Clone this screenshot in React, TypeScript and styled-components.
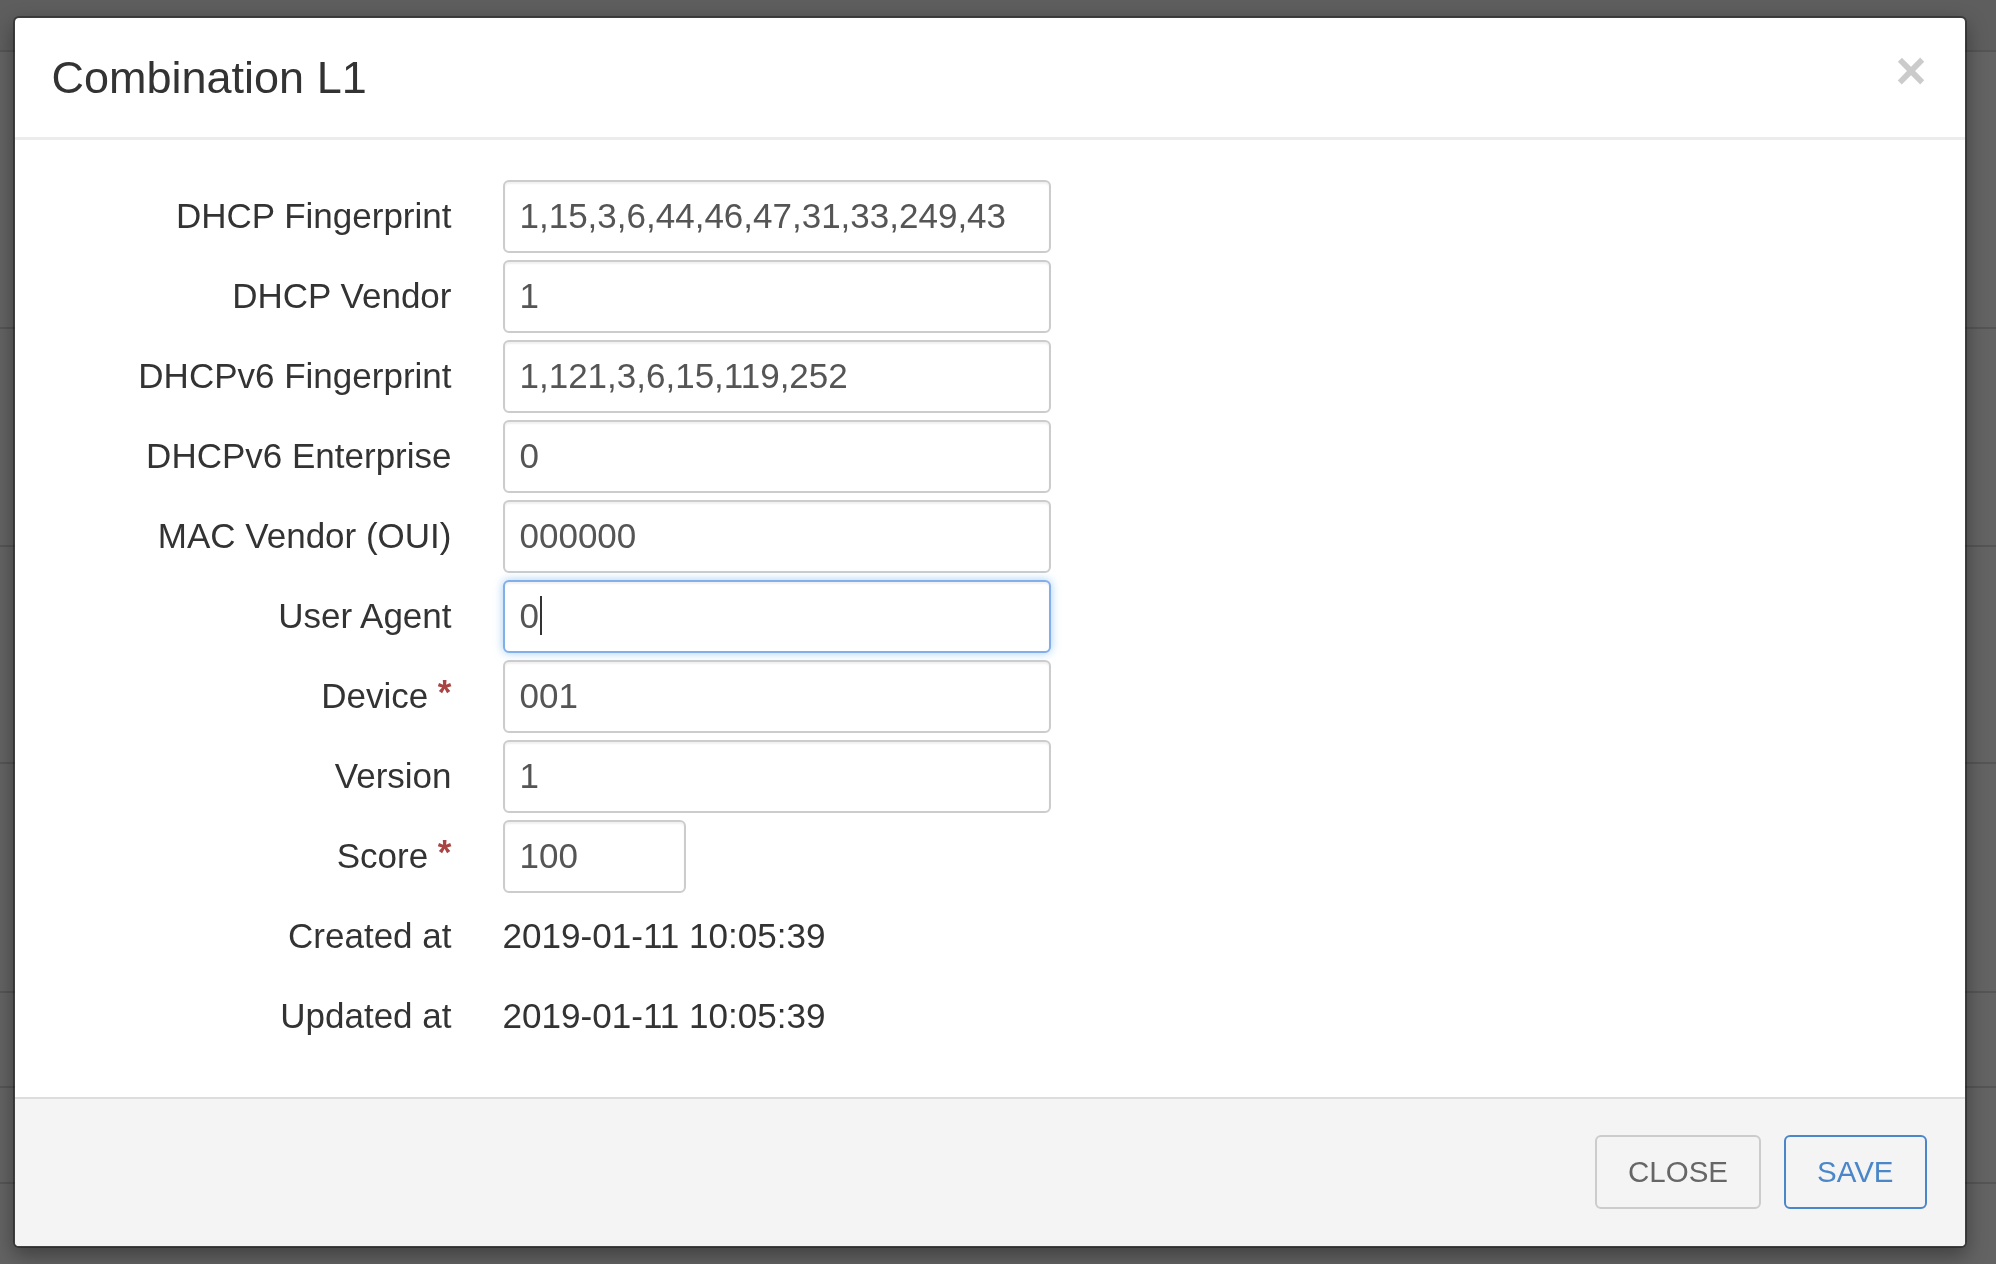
import React from "react";
import styled, { createGlobalStyle } from "styled-components";

const GlobalStyle = createGlobalStyle`
  html, body {
    margin: 0;
    padding: 0;
    background: #636363;
    font-family: "Liberation Sans", Arial, Helvetica, sans-serif;
  }
  * { box-sizing: border-box; }
`;

const Page = styled.div`
  height: 1264px;
  overflow: hidden;
  background: #636363;
  display: flex;
  flex-direction: column;
`;

const PageRow = styled.div<{ $h: number; $bg?: string }>`
  height: ${(p) => p.$h}px;
  flex: none;
  background: ${(p) => p.$bg || "transparent"};
  border-bottom: 2.5px solid #555555;
`;

const Dialog = styled.div`
  position: fixed;
  left: 12.5px;
  top: 16px;
  width: 1954px;
  background: #ffffff;
  background-clip: padding-box;
  border: 2.5px solid rgba(0, 0, 0, 0.35);
  border-radius: 6px;
  box-shadow: 0 8px 20px rgba(0, 0, 0, 0.35);
  color: #333333;
  overflow: hidden;
`;

const Header = styled.div`
  height: 122px;
  display: flex;
  align-items: center;
  justify-content: space-between;
  padding: 0 38px 0 37px;
  border-bottom: 3px solid #ececec;
`;

const Title = styled.h4`
  margin: 0;
  font-size: 45px;
  font-weight: normal;
  line-height: 1.1;
  color: #333333;
`;

const CloseX = styled.button`
  border: 0;
  background: transparent;
  padding: 0;
  margin: -14px 0 0 0;
  font-family: "Liberation Sans", Arial, sans-serif;
  font-size: 53px;
  font-weight: bold;
  line-height: 1;
  color: #000;
  opacity: 0.2;
  cursor: pointer;
`;

const Body = styled.div`
  padding: 39.5px 0 44.5px;
`;

const Form = styled.div`
  display: grid;
  grid-template-columns: 437px 1fr;
  column-gap: 51px;
  row-gap: 7px;
  grid-auto-rows: 73px;
`;

const Label = styled.label`
  display: flex;
  align-items: center;
  justify-content: flex-end;
  font-size: 35px;
  color: #333333;
  white-space: pre;
`;

const Required = styled.span`
  color: #a94442;
  font-weight: bold;
  align-self: flex-start;
  margin-top: 12px;
`;

const Cell = styled.div`
  display: flex;
  align-items: center;
  position: relative;
`;

const Input = styled.input<{ $width?: number; $focused?: boolean }>`
  width: ${(p) => p.$width || 548}px;
  height: 73px;
  padding: 0 15px;
  font-family: "Liberation Sans", Arial, sans-serif;
  font-size: 35px;
  color: #555555;
  background: #ffffff;
  border: 2.5px solid ${(p) => (p.$focused ? "#82aeea" : "#cccccc")};
  border-radius: 6px;
  outline: none;
  box-shadow: ${(p) =>
    p.$focused
      ? "inset 0 2px 2px rgba(0,0,0,0.06), 0 0 10px rgba(102,175,233,0.6)"
      : "inset 0 2px 2px rgba(0,0,0,0.06)"};
`;

const Caret = styled.span`
  position: absolute;
  left: 37px;
  top: 16px;
  width: 2px;
  height: 39px;
  background: #333333;
`;

const Value = styled.div`
  display: flex;
  align-items: center;
  font-size: 35.1px;
  color: #333333;
`;

const Footer = styled.div`
  display: flex;
  justify-content: flex-end;
  gap: 23px;
  padding: 35.5px 38px 37px;
  background: #f4f4f4;
  border-top: 2.5px solid #dddddd;
`;

const Button = styled.button<{ $primary?: boolean }>`
  height: 74px;
  padding: 0 31px;
  font-family: "Liberation Sans", Arial, sans-serif;
  font-size: 29.5px;
  text-transform: uppercase;
  background: transparent;
  border: 2.5px solid ${(p) => (p.$primary ? "#4a86c8" : "#cccccc")};
  color: ${(p) => (p.$primary ? "#4a86c8" : "#666666")};
  border-radius: 6px;
  cursor: pointer;
`;

type Field = {
  label: string;
  value: string;
  required?: boolean;
  width?: number;
  focused?: boolean;
  plain?: boolean;
};

const fields: Field[] = [
  { label: "DHCP Fingerprint", value: "1,15,3,6,44,46,47,31,33,249,43" },
  { label: "DHCP Vendor", value: "1" },
  { label: "DHCPv6 Fingerprint", value: "1,121,3,6,15,119,252" },
  { label: "DHCPv6 Enterprise", value: "0" },
  { label: "MAC Vendor (OUI)", value: "000000" },
  { label: "User Agent", value: "0", focused: true },
  { label: "Device", value: "001", required: true },
  { label: "Version", value: "1" },
  { label: "Score", value: "100", required: true, width: 183 },
  { label: "Created at", value: "2019-01-11 10:05:39", plain: true },
  { label: "Updated at", value: "2019-01-11 10:05:39", plain: true },
];

export default function App() {
  return (
    <>
      <GlobalStyle />
      <Page>
        <PageRow $h={52} $bg="#5e5e5e" />
        <PageRow $h={277} />
        <PageRow $h={218} />
        <PageRow $h={217} />
        <PageRow $h={229} />
        <PageRow $h={95} />
        <PageRow $h={96} />
      </Page>
      <Dialog role="dialog">
        <Header>
          <Title>Combination L1</Title>
          <CloseX aria-label="Close">×</CloseX>
        </Header>
        <Body>
          <Form>
            {fields.map((f) => (
              <React.Fragment key={f.label}>
                <Label>
                  {f.label}
                  {f.required && <Required> *</Required>}
                </Label>
                {f.plain ? (
                  <Value>{f.value}</Value>
                ) : (
                  <Cell>
                    <Input
                      defaultValue={f.value}
                      $width={f.width}
                      $focused={f.focused}
                    />
                    {f.focused && <Caret />}
                  </Cell>
                )}
              </React.Fragment>
            ))}
          </Form>
        </Body>
        <Footer>
          <Button>Close</Button>
          <Button $primary>Save</Button>
        </Footer>
      </Dialog>
    </>
  );
}
